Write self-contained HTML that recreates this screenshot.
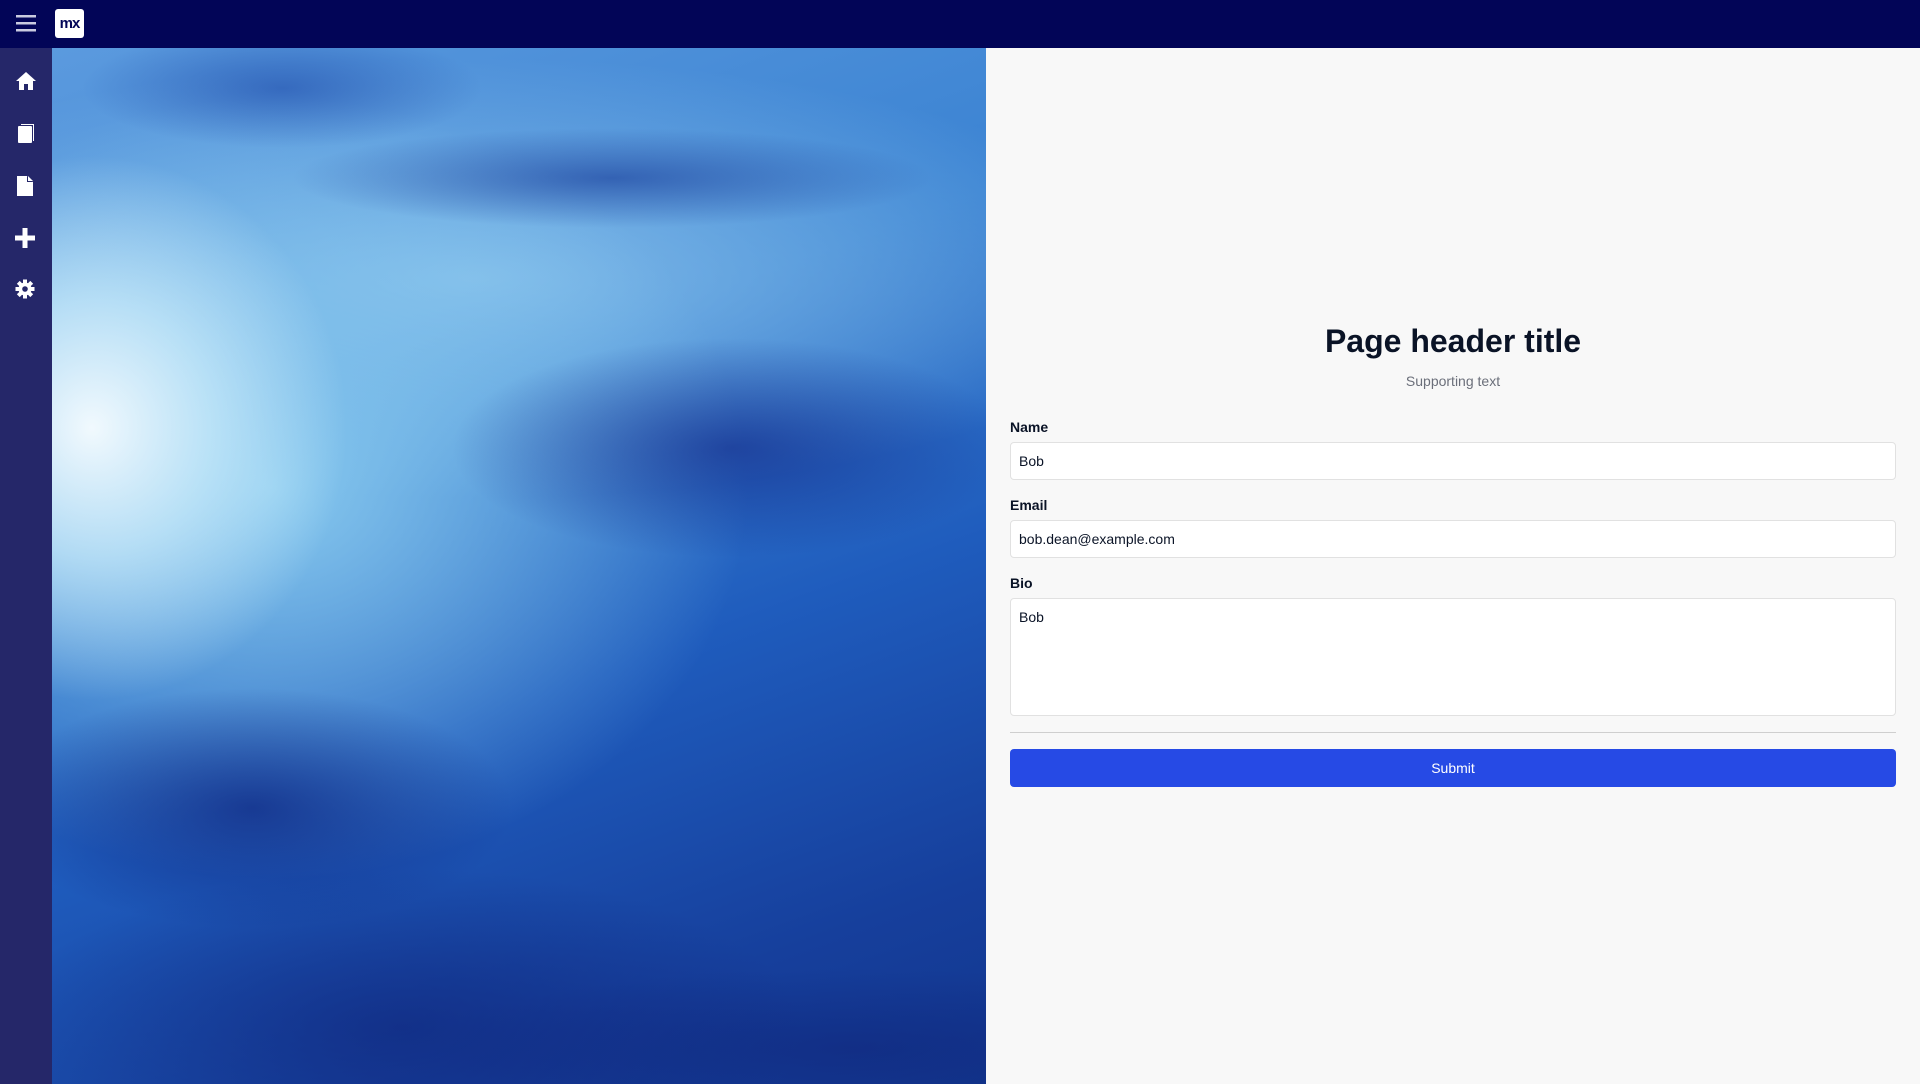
<!DOCTYPE html>
<html><head><meta charset="utf-8"><style>
*{box-sizing:border-box;margin:0;padding:0}
body{width:1920px;height:1084px;overflow:hidden;background:#f8f8f8;font-family:"Liberation Sans",sans-serif;position:relative}
.top{position:absolute;left:0;top:0;width:1920px;height:48px;background:#020557}
.side{position:absolute;left:0;top:48px;width:52px;height:1036px;background:#252769}
.img{position:absolute;left:52px;top:48px;width:934px;height:1036px;
background:
radial-gradient(ellipse 260px 120px at 200px 760px,rgba(15,40,130,.75),transparent),
radial-gradient(ellipse 280px 110px at 680px 400px,rgba(20,45,140,.7),transparent),
radial-gradient(ellipse 320px 50px at 560px 130px,rgba(20,55,150,.6),transparent),
radial-gradient(ellipse 200px 60px at 230px 40px,rgba(20,60,160,.5),transparent),
radial-gradient(ellipse 400px 160px at 350px 980px,rgba(15,35,120,.6),transparent),
radial-gradient(ellipse 420px 80px at 800px 1000px,rgba(15,35,120,.5),transparent),
radial-gradient(ellipse 300px 320px at 40px 380px,rgba(248,253,255,.95),rgba(210,240,252,.7) 40%,transparent 85%),
radial-gradient(ellipse 560px 460px at 220px 440px,rgba(140,205,240,.95),transparent 85%),
radial-gradient(ellipse 700px 220px at 420px 230px,rgba(150,205,240,.75),transparent),
linear-gradient(160deg,#5b9ade 0%,#3a82d2 35%,#1f5cbd 60%,#163f9c 85%,#12368e 100%);}
.panel{position:absolute;left:986px;top:48px;width:934px;height:1036px}
h1{position:absolute;left:0;width:934px;top:273px;text-align:center;font-size:32px;font-weight:600;color:#0a1326;line-height:40px}
.sub{position:absolute;left:0;width:934px;top:325px;text-align:center;font-size:14px;color:#6b6f7a}
.lbl{position:absolute;left:24px;font-size:14px;font-weight:bold;color:#0a1326}
.in{position:absolute;left:24px;width:886px;background:#fff;border:1px solid #e1e1e1;border-radius:4px;font-size:14px;color:#0a1326;padding:0 8px}
.hr{position:absolute;left:24px;width:886px;top:684px;height:1px;background:#cfcfcf}
.btn{position:absolute;left:24px;width:886px;top:701px;height:38px;background:#264ae5;border-radius:4px;color:#fff;font-size:14px;text-align:center;line-height:38px}
</style></head><body>
<div class="top">
<svg style="position:absolute;left:16px;top:14px" width="20" height="18"><rect y="1" width="20" height="2.5" fill="#c9cbe0"/><rect y="8" width="20" height="2.5" fill="#c9cbe0"/><rect y="15" width="20" height="2.5" fill="#c9cbe0"/></svg>
<div style="position:absolute;left:55px;top:9px;width:29px;height:29px;background:#fff;border-radius:3px;color:#020557;font-weight:bold;font-size:15px;line-height:29px;text-align:center;letter-spacing:-1px">mx</div>
</div>
<div class="side">
<svg style="position:absolute;left:15px;top:23px" width="22" height="20"><path d="M11 1L1 10h3v9h5v-6h4v6h5v-9h3z" fill="#fff"/></svg>
<svg style="position:absolute;left:17px;top:75px" width="20" height="22"><path d="M4 1h13v17h-1V2H4z" fill="#fff"/><rect x="1" y="3" width="14" height="17" rx="1" fill="#fff"/></svg>
<svg style="position:absolute;left:16px;top:127px" width="18" height="22"><path d="M1 1h10l6 6v14H1z" fill="#fff"/><path d="M11 1v6h6" fill="#252769"/><path d="M12 1l5 5h-5z" fill="#fff"/></svg>
<svg style="position:absolute;left:15px;top:180px" width="20" height="20"><rect x="7.5" y="0" width="5" height="20" fill="#fff"/><rect x="0" y="7.5" width="20" height="5" fill="#fff"/></svg>
<svg style="position:absolute;left:15px;top:231px" width="20" height="20" viewBox="0 0 20 20"><g fill="#fff"><circle cx="10" cy="10" r="6.5"/><g id="t"><rect x="8" y="0.5" width="4" height="4"/><rect x="8" y="15.5" width="4" height="4"/></g><use href="#t" transform="rotate(45 10 10)"/><use href="#t" transform="rotate(90 10 10)"/><use href="#t" transform="rotate(135 10 10)"/></g><circle cx="10" cy="10" r="2.8" fill="#252769"/></svg>
</div>
<div class="img"></div>
<div class="panel">
<h1>Page header title</h1>
<div class="sub">Supporting text</div>
<div class="lbl" style="top:371px">Name</div>
<div class="in" style="top:394px;height:38px;line-height:36px">Bob</div>
<div class="lbl" style="top:449px">Email</div>
<div class="in" style="top:472px;height:38px;line-height:36px">bob.dean@example.com</div>
<div class="lbl" style="top:527px">Bio</div>
<div class="in" style="top:550px;height:118px;padding-top:9px;line-height:18px">Bob</div>
<div class="hr"></div>
<div class="btn">Submit</div>
</div>
</body></html>
